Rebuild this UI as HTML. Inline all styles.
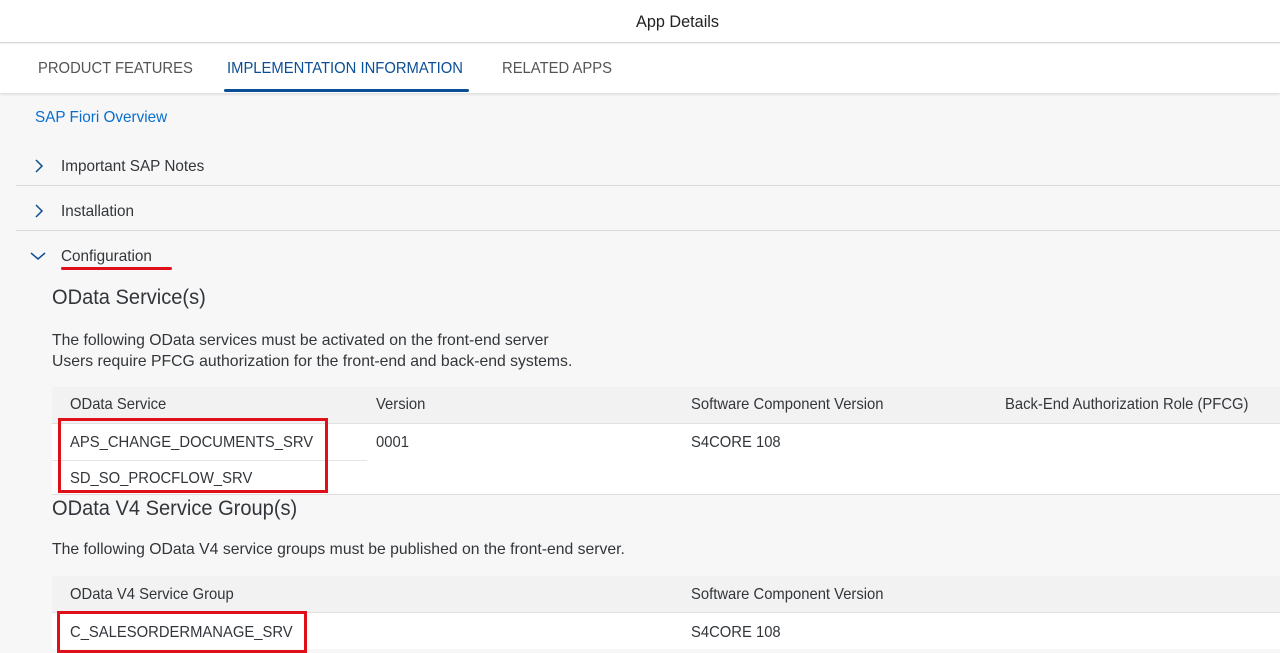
<!DOCTYPE html>
<html><head><style>
*{margin:0;padding:0;box-sizing:border-box}
body{width:1280px;height:649px;overflow:hidden;background:#f7f7f7;font-family:"Liberation Sans",Arial,sans-serif;color:#32363a;position:relative}
.a{position:absolute;white-space:nowrap}
.t{transform:scaleX(0.925);transform-origin:0 0}
.h{transform:scaleX(0.955);transform-origin:0 0}
.p{transform:scaleX(0.985);transform-origin:0 0}
</style></head><body>
<div class="a" style="left:0;top:0;width:1280px;height:43px;background:#fff;border-bottom:1px solid #d9d9d9"></div>
<div class="a h" style="left:636px;top:12px;font-size:17px;color:#222">App Details</div>
<div class="a" style="left:0;top:44px;width:1280px;height:49px;background:#fff;box-shadow:0 1px 3px rgba(0,0,0,.15)"></div>
<div class="a t" style="left:38px;top:60px;font-size:16px;color:#555">PRODUCT FEATURES</div>
<div class="a t" style="left:227px;top:60px;font-size:16px;color:#0a4f95">IMPLEMENTATION INFORMATION</div>
<div class="a" style="left:224px;top:89px;width:245px;height:3px;background:#0a4f95;border-radius:2px"></div>
<div class="a t" style="left:502px;top:60px;font-size:16px;color:#555">RELATED APPS</div>
<div class="a h" style="left:35px;top:109px;font-size:16px;color:#0a6ed1">SAP Fiori Overview</div>
<svg class="a" style="left:33px;top:158px" width="12" height="16"><path d="M3 2l6 6-6 6" fill="none" stroke="#0a4f95" stroke-width="1.5"/></svg>
<div class="a h" style="left:61px;top:158px;font-size:16px">Important SAP Notes</div>
<div class="a" style="left:16px;top:185px;width:1264px;height:1px;background:#d9d9d9"></div>
<svg class="a" style="left:33px;top:203px" width="12" height="16"><path d="M3 2l6 6-6 6" fill="none" stroke="#0a4f95" stroke-width="1.5"/></svg>
<div class="a h" style="left:61px;top:203px;font-size:16px">Installation</div>
<div class="a" style="left:16px;top:230px;width:1264px;height:1px;background:#d9d9d9"></div>
<svg class="a" style="left:29px;top:250px" width="18" height="12"><path d="M2 3l7 6 7-6" fill="none" stroke="#0a4f95" stroke-width="1.5"/></svg>
<div class="a h" style="left:61px;top:248px;font-size:16px">Configuration</div>
<div class="a" style="left:61px;top:267px;width:111px;height:3px;background:#e0101a;border-radius:2px"></div>
<div class="a h" style="left:52px;top:286px;font-size:21px">OData Service(s)</div>
<div class="a p" style="left:52px;top:330px;font-size:16px;line-height:21px">The following OData services must be activated on the front-end server<br>Users require PFCG authorization for the front-end and back-end systems.</div>
<div class="a" style="left:52px;top:387px;width:1228px;height:37px;background:#f2f2f2;border-bottom:1px solid #e0e0e0"></div>
<div class="a" style="left:52px;top:424px;width:1228px;height:71px;background:#fff;border-bottom:1px solid #e0e0e0"></div>
<div class="a" style="left:52px;top:460px;width:315px;height:1px;background:#e5e5e5"></div>
<div class="a t" style="left:70px;top:396px;font-size:16px">OData Service</div>
<div class="a t" style="left:376px;top:396px;font-size:16px">Version</div>
<div class="a t" style="left:691px;top:396px;font-size:16px">Software Component Version</div>
<div class="a t" style="left:1005px;top:396px;font-size:16px">Back-End Authorization Role (PFCG)</div>
<div class="a t" style="left:70px;top:434px;font-size:16px">APS_CHANGE_DOCUMENTS_SRV</div>
<div class="a t" style="left:376px;top:434px;font-size:16px">0001</div>
<div class="a t" style="left:691px;top:434px;font-size:16px">S4CORE 108</div>
<div class="a t" style="left:70px;top:470px;font-size:16px">SD_SO_PROCFLOW_SRV</div>
<div class="a" style="left:58px;top:418px;width:270px;height:75px;border:3px solid #e0101a"></div>
<div class="a h" style="left:52px;top:497px;font-size:21px">OData V4 Service Group(s)</div>
<div class="a p" style="left:52px;top:541px;font-size:16px">The following OData V4 service groups must be published on the front-end server.</div>
<div class="a" style="left:52px;top:576px;width:1228px;height:37px;background:#f2f2f2;border-bottom:1px solid #e0e0e0"></div>
<div class="a" style="left:52px;top:613px;width:1228px;height:36px;background:#fff"></div>
<div class="a t" style="left:70px;top:586px;font-size:16px">OData V4 Service Group</div>
<div class="a t" style="left:691px;top:586px;font-size:16px">Software Component Version</div>
<div class="a t" style="left:70px;top:624px;font-size:16px">C_SALESORDERMANAGE_SRV</div>
<div class="a t" style="left:691px;top:624px;font-size:16px">S4CORE 108</div>
<div class="a" style="left:57px;top:611px;width:250px;height:42px;border:3px solid #e0101a"></div>
</body></html>
